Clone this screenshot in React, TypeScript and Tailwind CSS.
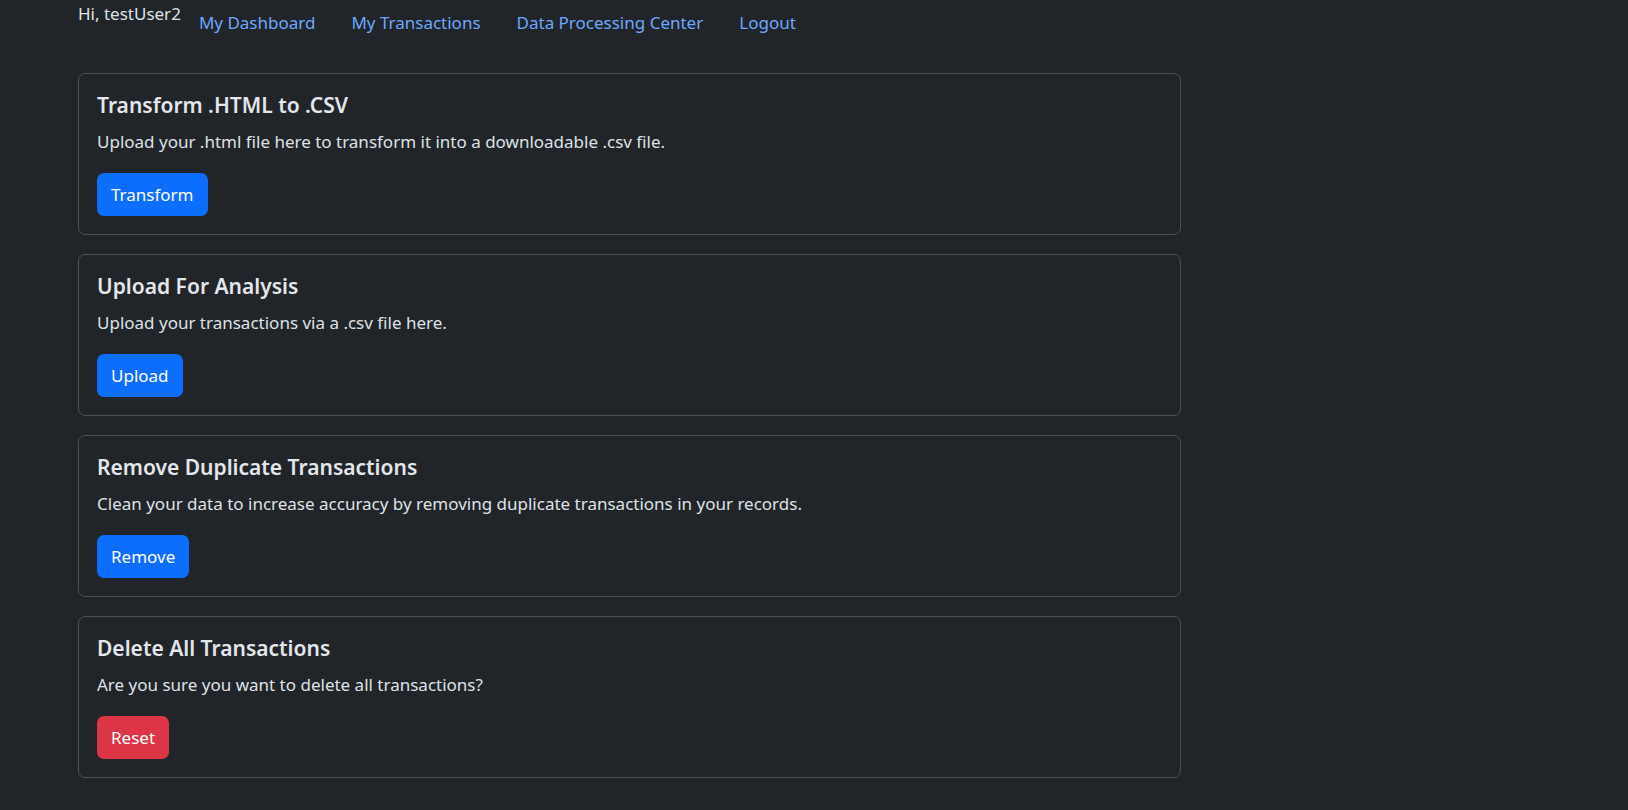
type CardProps = {
  title: string
  text: string
  action: string
  danger?: boolean
}

function ToolCard({ title, text, action, danger }: CardProps) {
  return (
    <section className="rounded-[7px] border border-[#4a4f55] bg-[#212529] p-[18px]">
      <h5 className="mb-[9px] text-[21px] font-semibold leading-[27px] text-[#e3e6ea]">{title}</h5>
      <p className="mb-[18px] text-[17px] leading-[27px] text-[#dee2e6]">{text}</p>
      <button
        type="button"
        className={
          danger
            ? 'h-[43px] rounded-[7px] bg-[#dc3545] px-[14px] text-[17px] text-white'
            : 'h-[43px] rounded-[7px] bg-[#0d6efd] px-[14px] text-[17px] text-white'
        }
      >
        {action}
      </button>
    </section>
  )
}

const cards: CardProps[] = [
  {
    title: 'Transform .HTML to .CSV',
    text: 'Upload your .html file here to transform it into a downloadable .csv file.',
    action: 'Transform',
  },
  {
    title: 'Upload For Analysis',
    text: 'Upload your transactions via a .csv file here.',
    action: 'Upload',
  },
  {
    title: 'Remove Duplicate Transactions',
    text: 'Clean your data to increase accuracy by removing duplicate transactions in your records.',
    action: 'Remove',
  },
  {
    title: 'Delete All Transactions',
    text: 'Are you sure you want to delete all transactions?',
    action: 'Reset',
    danger: true,
  },
]

const links = ['My Dashboard', 'My Transactions', 'Data Processing Center', 'Logout']

export default function App() {
  return (
    <div className="min-h-screen bg-[#212529] font-['Noto_Sans','Open_Sans',sans-serif] text-[#dee2e6]">
      <nav className="flex items-start pl-[78px]">
        <span className="text-[17px] leading-[27px] text-[#dee2e6]">Hi, testUser2</span>
        <ul className="flex pt-[9px]">
          {links.map((l) => (
            <li key={l}>
              <a href="#" className="block px-[18px] text-[17px] leading-[27px] text-[#6ea8fe]">
                {l}
              </a>
            </li>
          ))}
        </ul>
      </nav>
      <main className="ml-[78px] mt-[37px] flex w-[1103px] flex-col gap-[19px] pb-8">
        {cards.map((c) => (
          <ToolCard key={c.title} {...c} />
        ))}
      </main>
    </div>
  )
}
